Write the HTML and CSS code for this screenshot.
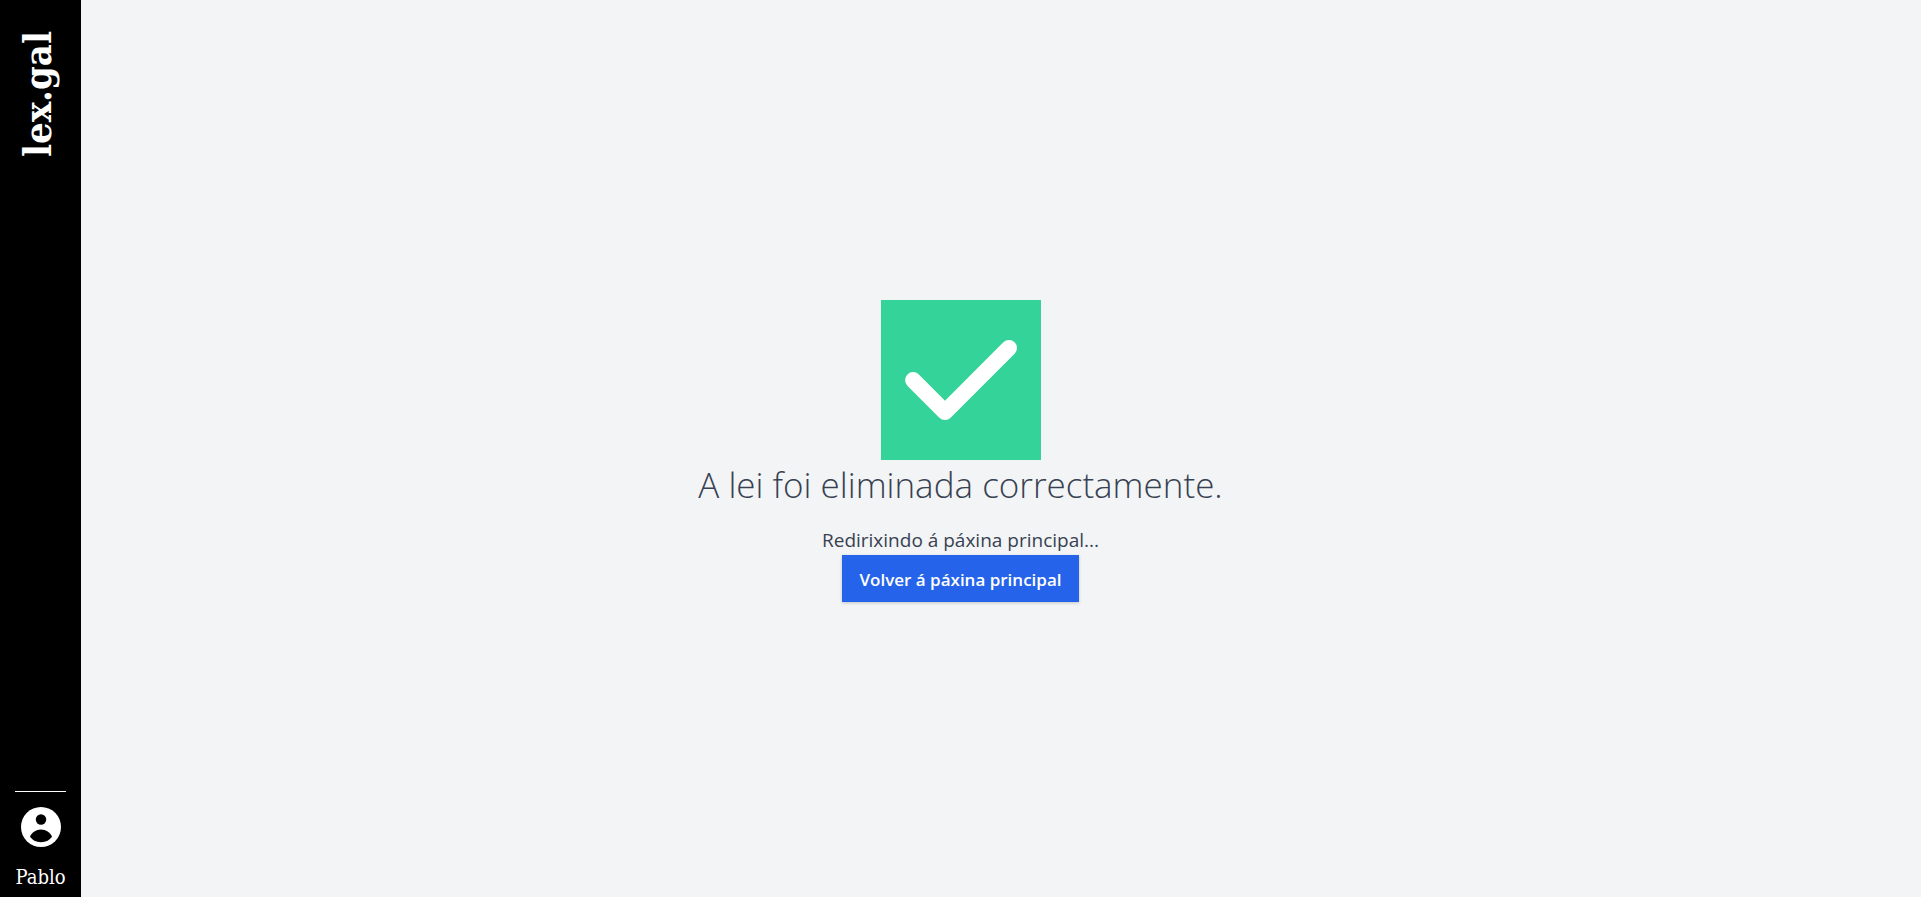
FILE: index.html
```html
<!DOCTYPE html>
<html lang="gl">
<head>
<meta charset="utf-8">
<meta name="viewport" content="width=device-width, initial-scale=1">
<title>lex.gal</title>
<link rel="stylesheet" href="styles.css">
</head>
<body>
<nav class="sidebar">
  <a class="brand" href="#">lex.gal</a>
  <a class="user" href="#">
    <svg class="user-icon" viewBox="0 0 40 40" aria-hidden="true">
      <circle cx="20" cy="20" r="20" fill="#fff"/>
      <circle cx="20" cy="12.500" r="5.200" fill="#000"/>
      <path d="M9 29.5C11 25.500 15 22.500 20 22.500S29 25.500 31 29.500C29 33 25 35.200 20 35.200S11 33 9 29.500Z" fill="#000"/>
    </svg>
    <span>Pablo</span>
  </a>
</nav>
<main class="page">
  <svg class="check" viewBox="0 0 20 20" aria-hidden="true">
    <path fill="#fff" d="M16.707 5.293a1 1 0 010 1.414l-8 8a1 1 0 01-1.414 0l-4-4a1 1 0 011.414-1.414L8 12.586l7.293-7.293a1 1 0 011.414 0z"/>
  </svg>
  <h1 class="title">A lei foi eliminada correctamente.</h1>
  <p class="message">Redirixindo á páxina principal...</p>
  <button class="button" type="button">Volver á páxina principal</button>
</main>
</body>
</html>
```
FILE: styles.css
```css
* {
  box-sizing: border-box;
}

body {
  margin: 0;
  background: #f3f4f6;
  color: #374151;
  font-family: "Open Sans", "Noto Sans", sans-serif;
}

.sidebar {
  position: fixed;
  inset: 0 auto 0 0;
  width: 81px;
  padding: 31px 15px 6px;
  display: flex;
  flex-direction: column;
  align-items: center;
  justify-content: space-between;
  background: #000;
  font-family: "DejaVu Serif Condensed", "DejaVu Serif", serif;
}

.brand {
  padding-left: 6px;
  writing-mode: vertical-rl;
  transform: rotate(180deg);
  color: #fff;
  font-size: 38px;
  font-weight: 700;
  line-height: 48px;
  text-decoration: none;
}

.user {
  display: flex;
  flex-direction: column;
  align-items: center;
  gap: 16px;
  padding-top: 15px;
  border-top: 1px solid #fff;
  color: #fff;
  font-size: 20px;
  line-height: 28px;
  text-decoration: none;
}

.user-icon {
  width: 40px;
  height: 40px;
}

.page {
  min-height: 100vh;
  padding-top: 5px;
  display: flex;
  flex-direction: column;
  align-items: center;
  justify-content: center;
}

.check {
  width: 160px;
  height: 160px;
  background: #34d399;
}

.title {
  margin: 0 0 16px;
  font-size: 35px;
  font-weight: 300;
  line-height: 50px;
}

.message {
  margin: 0;
  font-size: 19px;
  line-height: 29px;
}

.button {
  padding: 13px 17px 11px;
  border: 0;
  background: #2563eb;
  box-shadow: 0 1px 3px rgba(0, 0, 0, 0.2);
  color: #fff;
  font-family: inherit;
  font-size: 17px;
  font-weight: 600;
  line-height: 23px;
  cursor: pointer;
}
```
